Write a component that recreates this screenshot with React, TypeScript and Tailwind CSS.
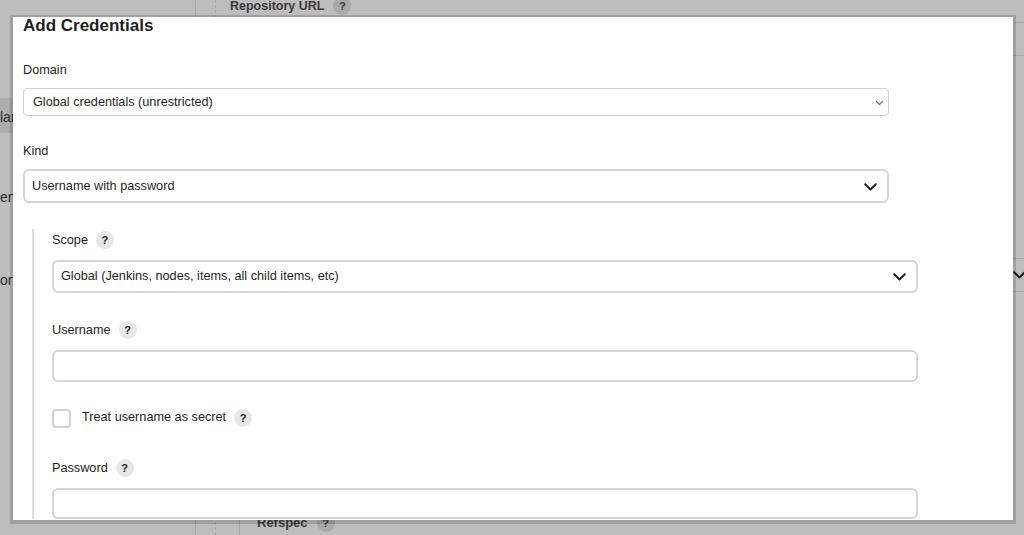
const ink = "text-[#1f1f23]";
const body = "text-[12.7px]";

function Help() {
  return (
    <span className="ml-[8px] flex h-[18px] w-[18px] items-center justify-center rounded-full bg-[#e7e7ea] text-[11px] font-bold text-[#222]">
      ?
    </span>
  );
}

function Chevron({ small }: { small?: boolean }) {
  if (small) {
    return (
      <svg width="9" height="6" viewBox="0 0 9 6" fill="none">
        <path d="M1 1l3.5 3.5L8 1" stroke="#6b6b6b" strokeWidth="1.1" />
      </svg>
    );
  }
  return (
    <svg width="13" height="8" viewBox="0 0 13 8" fill="none">
      <path d="M1.2 1.2l5.3 5.3 5.3-5.3" stroke="#1f1f23" strokeWidth="2" strokeLinecap="round" strokeLinejoin="round" />
    </svg>
  );
}

function Label({ text, help }: { text: string; help?: boolean }) {
  return (
    <div className={`flex h-[20px] items-center ${body} leading-[16px] ${ink}`}>
      <span>{text}</span>
      {help && <Help />}
    </div>
  );
}

function Backdrop() {
  return (
    <div className="flex h-full w-full">
      <div className="flex w-[196px] shrink-0 flex-col border-r border-[#a7a7a7] text-[14px] text-[#2c2c2c]">
        <div className="h-[98px]" />
        <div className="h-[35px] bg-[#adadad] leading-[38px]">lar</div>
        <div className="mt-[47px] h-[35px] leading-[35px]">en</div>
        <div className="mt-[48px] h-[35px] leading-[35px]">on</div>
      </div>
      <div className="flex-1 pl-[19px]">
        <div className="flex h-full flex-col border-l border-dashed border-[#a7a7a7] pl-[14px]">
          <div className="mt-[-1px] flex h-[14px] items-center text-[12.5px] font-bold leading-[14px] text-[#3a3a3a]">
            Repository URL
            <span className="ml-[9px] flex h-[18px] w-[18px] items-center justify-center rounded-full bg-[#a9a9a9] text-[11px]">?</span>
          </div>
          <div className="mt-[9px] h-[34px] w-[840px] rounded-[6px] border border-[#a9a9a9]" />
          <div className="mt-[202px] flex h-[34px] w-[840px] items-center rounded-[6px] border border-[#a9a9a9] pl-[782px]">
            <Chevron />
          </div>
          <div className="ml-[9px] mt-[40px] flex flex-1 flex-col border-l border-[#a7a7a7] pl-[17px]">
            <div className="mt-[183px] flex h-[16px] items-center text-[13px] font-bold text-[#3a3a3a]">
              Refspec
              <span className="ml-[9px] flex h-[18px] w-[18px] items-center justify-center rounded-full bg-[#a9a9a9] text-[11px]">?</span>
            </div>
          </div>
        </div>
      </div>
    </div>
  );
}

export default function App() {
  return (
    <div className="relative h-[535px] w-[1024px] overflow-hidden bg-[#bdbdbd] font-['Liberation_Sans',Arial,sans-serif]">
      <Backdrop />
      <div className="absolute left-[10px] top-[15px] h-[509px] w-[1006px] border-[3px] border-t-2 border-b-4 border-black/15 bg-clip-padding">
        <div className="h-full overflow-hidden bg-white px-[10px]">
          <h2 className={`text-[17px] font-bold leading-[17px] ${ink}`}>Add Credentials</h2>

          <div className={`mt-[28px] ${body} leading-[16px] ${ink}`}>Domain</div>
          <div className={`mt-[10px] flex h-[28px] w-[866px] items-center justify-between rounded-[4px] border border-[#cfd0d3] pl-[9px] pr-[4px] pt-[1px] ${body} ${ink}`}>
            <span>Global credentials (unrestricted)</span>
            <Chevron small />
          </div>

          <div className={`mt-[27px] ${body} leading-[16px] ${ink}`}>Kind</div>
          <div className={`mt-[10px] flex h-[34px] w-[866px] items-center justify-between rounded-[6px] border-2 border-[#d2d5da] pl-[7px] pr-[10px] pt-[1px] ${body} ${ink}`}>
            <span>Username with password</span>
            <Chevron />
          </div>

          <div className="ml-[9px] mt-[26px] border-l-2 border-[#dcdfe4] pl-[18px] pt-[1px]">
            <Label text="Scope" help />
            <div className={`mt-[10px] flex h-[33px] w-[866px] items-center justify-between rounded-[6px] border-2 border-[#d2d5da] pl-[7px] pr-[10px] pt-[1px] ${body} ${ink}`}>
              <span>Global (Jenkins, nodes, items, all child items, etc)</span>
              <Chevron />
            </div>

            <div className="mt-[27px]">
              <Label text="Username" help />
            </div>
            <div className="mt-[10px] h-[32px] w-[866px] rounded-[6px] border-2 border-[#d2d5da]" />

            <div className={`mt-[26px] flex h-[20px] items-center ${body} ${ink}`}>
              <span className="h-[19px] w-[19px] rounded-[4px] border-2 border-[#cfd2d7]" />
              <span className="ml-[11px]">Treat username as secret</span>
              <Help />
            </div>

            <div className="mt-[30px]">
              <Label text="Password" help />
            </div>
            <div className="mt-[10px] h-[31px] w-[866px] rounded-[6px] border-2 border-[#d2d5da]" />
          </div>
        </div>
      </div>
    </div>
  );
}
